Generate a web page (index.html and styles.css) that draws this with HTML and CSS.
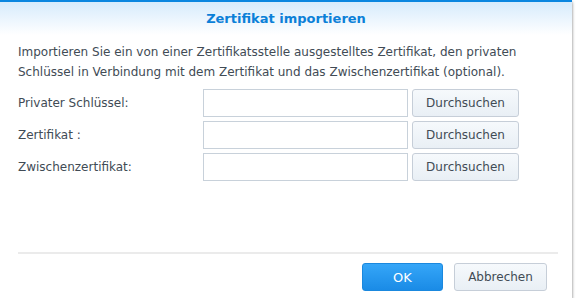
FILE: index.html
```html
<!DOCTYPE html>
<html lang="de">
<head>
    <meta charset="UTF-8">
    <title>Zertifikat importieren</title>
    <link rel="stylesheet" href="styles.css">
</head>
<body>
    <div class="dialog">
        <div class="dialog-header">Zertifikat importieren</div>
        <div class="dialog-body">
            <p class="intro">Importieren Sie ein von einer Zertifikatsstelle ausgestelltes Zertifikat, den privaten Schlüssel in Verbindung mit dem Zertifikat und das Zwischenzertifikat (optional).</p>
            <div class="field-row">
                <label class="field-label">Privater Schlüssel:</label>
                <input class="field-input" type="text">
                <button class="btn">Durchsuchen</button>
            </div>
            <div class="field-row">
                <label class="field-label">Zertifikat :</label>
                <input class="field-input" type="text">
                <button class="btn">Durchsuchen</button>
            </div>
            <div class="field-row">
                <label class="field-label">Zwischenzertifikat:</label>
                <input class="field-input" type="text">
                <button class="btn">Durchsuchen</button>
            </div>
        </div>
        <div class="dialog-footer">
            <button class="btn btn-primary btn-ok">OK</button>
            <button class="btn btn-cancel">Abbrechen</button>
        </div>
    </div>
</body>
</html>
```

FILE: styles.css
```css
body {
    margin: 0;
    background: #fff;
    font-family: "DejaVu Sans", Verdana, sans-serif;
    font-size: 12px;
    color: #414b55;
}
.dialog {
    width: 572px;
    height: 298px;
    display: flex;
    flex-direction: column;
    background: #fff;
    box-shadow: 0 2px 3px rgba(0, 0, 0, 0.55);
}
.dialog-header {
    height: 33px;
    border-top: 2px solid #0a86e0;
    background: linear-gradient(#d6ebfc, #fff);
    display: flex;
    justify-content: center;
    align-items: center;
    font-size: 13px;
    font-weight: bold;
    color: #0b80d8;
}
.dialog-body {
    flex: 1;
    padding: 7px 18px 0;
}
.intro {
    margin: 0 0 7px;
    line-height: 20px;
}
.field-row {
    display: flex;
    align-items: center;
    margin-bottom: 4px;
}
.field-label {
    width: 185px;
}
.field-input {
    width: 205px;
    height: 28px;
    box-sizing: border-box;
    border: 1px solid #c8d1da;
    border-radius: 0;
    margin: 0 4px 0 0;
    padding: 0 6px;
}
.btn {
    height: 28px;
    box-sizing: border-box;
    border: 1px solid #c6ced8;
    border-radius: 3px;
    background: linear-gradient(#f6f9fc, #e9eff5);
    font-family: inherit;
    font-size: 12px;
    color: #414b55;
    padding: 0;
    width: 107px;
}
.dialog-footer {
    margin: 0 14px 7px 18px;
    padding-top: 9px;
    border-top: 2px solid #ebebeb;
    display: flex;
    justify-content: flex-end;
    gap: 11px;
}
.btn-ok {
    width: 81px;
}
.btn-primary {
    border-color: #1a88de;
    background: linear-gradient(#35a6f8, #1a8be6);
    color: #fff;
    font-size: 13px;
}
.btn-cancel {
    width: 93px;
    margin-right: 11px;
}
```
